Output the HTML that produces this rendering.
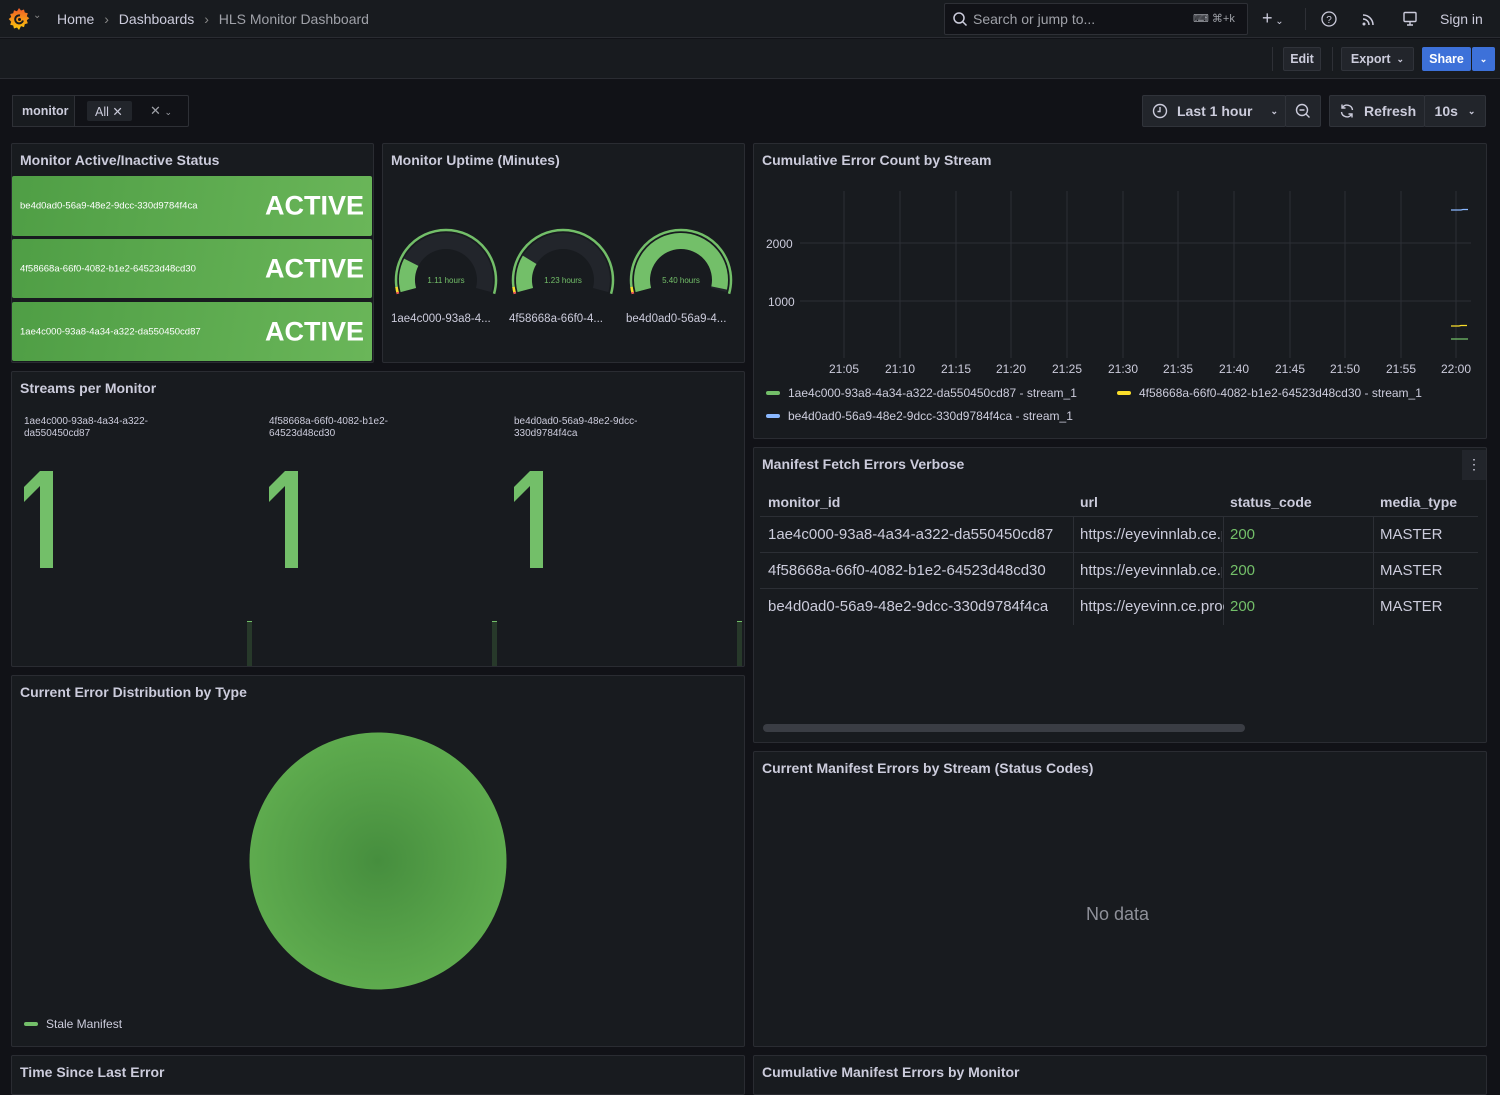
<!DOCTYPE html>
<html><head><meta charset="utf-8"><style>
*{box-sizing:border-box;margin:0;padding:0}
body{width:1500px;height:1071px;overflow:hidden;background:#111217;font-family:"Liberation Sans",sans-serif;color:#ccccdc;position:relative}
.a{position:absolute}
.panel{position:absolute;background:#181b1f;border:1px solid #2a2c32;border-radius:2px}
.pt{position:absolute;left:8px;top:8px;font-size:14px;font-weight:bold;color:#ccccdc;white-space:nowrap}
.btn{position:absolute;background:#22252b;border:1px solid #30333a;border-radius:2px;font-size:12.5px;font-weight:bold;color:#ccccdc;display:flex;align-items:center;justify-content:center}
.stat{position:absolute;left:12px;width:360px;background:linear-gradient(100deg,#4f9e45,#6ab659);border-radius:2px}
.stat .id{position:absolute;left:8px;top:50%;transform:translateY(-50%);font-size:9.5px;color:#fff}
.stat .v{position:absolute;right:8px;top:50%;transform:translateY(-50%);font-size:27px;color:#fff;font-weight:bold}
.lbl{position:absolute;font-size:11px;color:#ccccdc}
.td{position:absolute;font-size:15px;color:#ccccdc;white-space:nowrap;overflow:hidden}
</style></head><body>
<div class="a" style="left:0;top:0;width:1500px;height:38px;background:#181b1f;border-bottom:1px solid #2a2c32"></div>
<svg class="a" style="left:6px;top:6px" width="26" height="26" viewBox="0 0 26 26"><defs><linearGradient id="lg" x1="0" y1="1" x2="0" y2="0"><stop offset="0" stop-color="#fbca0a"/><stop offset="1" stop-color="#f05a28"/></linearGradient></defs><path d="M13 2l2 2.5 3-1 .8 3 3 .8-1 3 2.5 2-2.5 2 1 3-3 .8-.8 3-3-1L13 24l-2-2.5-3 1-.8-3-3-.8 1-3L2.7 13l2.5-2-1-3 3-.8.8-3 3 1z" fill="url(#lg)"/><path d="M14 9.5a4 4 0 1 0 3 5" stroke="#181b1f" stroke-width="2" fill="none"/><circle cx="13.5" cy="13.5" r="1.5" fill="#181b1f"/></svg>
<div class="a" style="left:33px;top:10px;font-size:10px;color:#888">⌄</div>
<div class="a" style="left:57px;top:11px;font-size:14px;color:#ccccdc">Home <span style="color:#888;margin:0 6px">›</span> Dashboards <span style="color:#888;margin:0 6px">›</span> <span style="color:#9fa1a8">HLS Monitor Dashboard</span></div>
<div class="a" style="left:944px;top:3px;width:304px;height:32px;background:#111217;border:1px solid #2e3036;border-radius:2px"></div>
<svg class="a" style="left:952px;top:11px" width="16" height="16"><circle cx="7" cy="7" r="5" stroke="#ccccdc" stroke-width="1.5" fill="none"/><path d="M11 11l3.5 3.5" stroke="#ccccdc" stroke-width="1.5"/></svg>
<div class="a" style="left:973px;top:11px;font-size:14px;color:#9fa1a8">Search or jump to...</div>
<div class="a" style="left:1193px;top:12px;font-size:11px;color:#9fa1a8">⌨ ⌘+k</div>
<div class="a" style="left:1262px;top:8px;font-size:18px;color:#ccccdc">+<span style="font-size:10px"> ⌄</span></div>
<div class="a" style="left:1305px;top:8px;width:1px;height:22px;background:#2e3036"></div>
<svg class="a" style="left:1321px;top:11px" width="16" height="16"><circle cx="8" cy="8" r="7" stroke="#ccccdc" stroke-width="1.3" fill="none"/><text x="8" y="12" font-size="10" text-anchor="middle" fill="#ccccdc" font-family="Liberation Sans">?</text></svg>
<svg class="a" style="left:1361px;top:11px" width="16" height="16"><circle cx="3" cy="13" r="1.5" fill="#ccccdc"/><path d="M2 8a6 6 0 0 1 6 6M2 4a10 10 0 0 1 10 10" stroke="#ccccdc" stroke-width="1.5" fill="none"/></svg>
<svg class="a" style="left:1402px;top:11px" width="16" height="16"><rect x="2" y="1.5" width="12" height="9" rx="1" stroke="#ccccdc" stroke-width="1.4" fill="none"/><path d="M5 14h6M8 10.5v3.5" stroke="#ccccdc" stroke-width="1.4"/></svg>
<div class="a" style="left:1440px;top:11px;font-size:14px;color:#ccccdc">Sign in</div>
<div class="a" style="left:0;top:39px;width:1500px;height:40px;background:#181b1f;border-bottom:1px solid #2a2c32"></div>
<div class="a" style="left:1272px;top:47px;width:1px;height:24px;background:#2e3036"></div>
<div class="btn" style="left:1283px;top:47px;width:38px;height:24px">Edit</div>
<div class="a" style="left:1332px;top:47px;width:1px;height:24px;background:#2e3036"></div>
<div class="btn" style="left:1341px;top:47px;width:73px;height:24px">Export <span style="font-size:9px;margin-left:6px">⌄</span></div>
<div class="btn" style="left:1422px;top:47px;width:49px;height:24px;background:#3d71d9;border-color:#3d71d9;color:#fff">Share</div>
<div class="btn" style="left:1472px;top:47px;width:23px;height:24px;background:#3d71d9;border-color:#3d71d9;color:#fff;font-size:9px">⌄</div>
<div class="a" style="left:12px;top:95px;width:177px;height:32px;border:1px solid #2e3036;border-radius:2px;background:#111217"></div>
<div class="a" style="left:12px;top:95px;width:63px;height:32px;border:1px solid #2e3036;background:#181b1f;font-size:12.5px;padding:8px 0 0 9px;font-weight:bold;color:#ccccdc">monitor</div>
<div class="a" style="left:87px;top:101px;width:45px;height:20px;background:#22252b;border-radius:2px;font-size:12.5px;padding:3px 0 0 8px">All ✕</div>
<div class="a" style="left:150px;top:103px;font-size:13px;color:#9fa1a8">✕ <span style="font-size:9px">⌄</span></div>
<div class="btn" style="left:1142px;top:95px;width:144px;height:32px;font-size:14px;justify-content:flex-start;padding-left:34px">Last 1 hour<span style="font-size:9px;margin-left:18px">⌄</span></div>
<svg class="a" style="left:1152px;top:103px" width="16" height="16"><circle cx="8" cy="8" r="6.5" stroke="#ccccdc" stroke-width="1.4" fill="none"/><path d="M8 4v4.5H5.5" stroke="#ccccdc" stroke-width="1.4" fill="none"/></svg>
<div class="btn" style="left:1285px;top:95px;width:36px;height:32px"></div>
<svg class="a" style="left:1295px;top:103px" width="16" height="16"><circle cx="7" cy="7" r="5.5" stroke="#ccccdc" stroke-width="1.4" fill="none"/><path d="M4.5 7h5M11 11l3.5 3.5" stroke="#ccccdc" stroke-width="1.4"/></svg>
<div class="btn" style="left:1329px;top:95px;width:96px;height:32px;font-size:14px;justify-content:flex-start;padding-left:34px">Refresh</div>
<svg class="a" style="left:1339px;top:103px" width="16" height="16"><path d="M13.5 7A5.5 5.5 0 0 0 3.5 4.5M2.5 9a5.5 5.5 0 0 0 10 2.5" stroke="#ccccdc" stroke-width="1.4" fill="none"/><path d="M3 1.5v3.5h3.5M13 14.5V11H9.5" stroke="#ccccdc" stroke-width="1.4" fill="none"/></svg>
<div class="btn" style="left:1424px;top:95px;width:62px;height:32px;font-size:14px">10s<span style="font-size:9px;margin-left:10px">⌄</span></div>

<div class="panel" style="left:11px;top:143px;width:363px;height:220px"><div class="pt">Monitor Active/Inactive Status</div></div>
<div class="stat" style="top:176px;height:60px"><div class="id">be4d0ad0-56a9-48e2-9dcc-330d9784f4ca</div><div class="v">ACTIVE</div></div>
<div class="stat" style="top:239px;height:59px"><div class="id">4f58668a-66f0-4082-b1e2-64523d48cd30</div><div class="v">ACTIVE</div></div>
<div class="stat" style="top:302px;height:59px"><div class="id">1ae4c000-93a8-4a34-a322-da550450cd87</div><div class="v">ACTIVE</div></div>

<div class="panel" style="left:382px;top:143px;width:363px;height:220px"><div class="pt">Monitor Uptime (Minutes)</div></div>
<svg id="gauges" class="a" style="left:382px;top:143px" width="363" height="220"></svg>
<div class="lbl" style="left:391px;top:313px;font-size:11.5px">1ae4c000-93a8-4...</div>
<div class="lbl" style="left:509px;top:313px;font-size:11.5px">4f58668a-66f0-4...</div>
<div class="lbl" style="left:626px;top:313px;font-size:11.5px">be4d0ad0-56a9-4...</div>

<div class="panel" style="left:753px;top:143px;width:734px;height:296px"><div class="pt">Cumulative Error Count by Stream</div></div>
<svg class="a" style="left:753px;top:143px" width="734" height="296" font-family="Liberation Sans" font-size="12" fill="#ccccdc">
<g stroke="#2c2f35" stroke-width="1">
<line x1="91" y1="48" x2="91" y2="215"/><line x1="147" y1="48" x2="147" y2="215"/><line x1="203" y1="48" x2="203" y2="215"/><line x1="258" y1="48" x2="258" y2="215"/><line x1="314" y1="48" x2="314" y2="215"/><line x1="370" y1="48" x2="370" y2="215"/><line x1="425" y1="48" x2="425" y2="215"/><line x1="481" y1="48" x2="481" y2="215"/><line x1="537" y1="48" x2="537" y2="215"/><line x1="592" y1="48" x2="592" y2="215"/><line x1="648" y1="48" x2="648" y2="215"/><line x1="703" y1="48" x2="703" y2="215"/>
<line x1="47" y1="100" x2="718" y2="100"/><line x1="47" y1="158" x2="718" y2="158"/></g>
<text x="13" y="105">2000</text><text x="15" y="163">1000</text>
<g text-anchor="middle"><text x="91" y="230">21:05</text><text x="147" y="230">21:10</text><text x="203" y="230">21:15</text><text x="258" y="230">21:20</text><text x="314" y="230">21:25</text><text x="370" y="230">21:30</text><text x="425" y="230">21:35</text><text x="481" y="230">21:40</text><text x="537" y="230">21:45</text><text x="592" y="230">21:50</text><text x="648" y="230">21:55</text><text x="703" y="230">22:00</text></g>
<path d="M698 67h10l2-.5h5" stroke="#8ab8ff" stroke-width="1.3" fill="none"/>
<path d="M698 183h8l2-.5h6" stroke="#fade2a" stroke-width="1.3" fill="none"/>
<path d="M698 196h17" stroke="#73bf69" stroke-width="1.3"/>
<rect x="13" y="248" width="14" height="4" rx="2" fill="#73bf69"/><text x="35" y="254">1ae4c000-93a8-4a34-a322-da550450cd87 - stream_1</text>
<rect x="364" y="248" width="14" height="4" rx="2" fill="#fade2a"/><text x="386" y="254">4f58668a-66f0-4082-b1e2-64523d48cd30 - stream_1</text>
<rect x="13" y="271" width="14" height="4" rx="2" fill="#8ab8ff"/><text x="35" y="277">be4d0ad0-56a9-48e2-9dcc-330d9784f4ca - stream_1</text>
</svg>

<div class="panel" style="left:11px;top:371px;width:734px;height:296px"><div class="pt">Streams per Monitor</div></div>
<div class="lbl" style="left:24px;top:416px;font-size:10px;line-height:12px">1ae4c000-93a8-4a34-a322-<br>da550450cd87</div>
<div class="lbl" style="left:269px;top:416px;font-size:10px;line-height:12px">4f58668a-66f0-4082-b1e2-<br>64523d48cd30</div>
<div class="lbl" style="left:514px;top:416px;font-size:10px;line-height:12px">be4d0ad0-56a9-48e2-9dcc-<br>330d9784f4ca</div>
<svg class="a" style="left:0;top:0" width="750" height="670">
<g fill="#73bf69">
<path d="M40 471h13v97H40V486l-16 16V487z"/>
<path d="M285 471h13v97h-13V486l-16 16V487z"/>
<path d="M530 471h13v97h-13V486l-16 16V487z"/>
</g>
<g fill="#27392a"><rect x="247" y="622" width="5" height="44"/><rect x="492" y="622" width="5" height="44"/><rect x="737" y="622" width="5" height="44"/></g>
<g fill="#73bf69"><rect x="247" y="621" width="5" height="1"/><rect x="492" y="621" width="5" height="1"/><rect x="737" y="621" width="5" height="1"/></g>
</svg>

<div class="panel" style="left:753px;top:447px;width:734px;height:296px"><div class="pt">Manifest Fetch Errors Verbose</div></div>
<div class="a" style="left:1462px;top:450px;width:24px;height:30px;background:#22252b;color:#ccccdc;font-size:14px;text-align:center;line-height:28px">⋮</div>
<div class="td" style="left:768px;top:494px;font-weight:bold;font-size:14px">monitor_id</div>
<div class="td" style="left:1080px;top:494px;font-weight:bold;font-size:14px">url</div>
<div class="td" style="left:1230px;top:494px;font-weight:bold;font-size:14px">status_code</div>
<div class="td" style="left:1380px;top:494px;font-weight:bold;font-size:14px">media_type</div>
<div class="a" style="left:760px;top:516px;width:718px;height:1px;background:#2c2f35"></div>
<div class="a" style="left:760px;top:552px;width:718px;height:1px;background:#2c2f35"></div>
<div class="a" style="left:760px;top:588px;width:718px;height:1px;background:#2c2f35"></div>
<div class="a" style="left:1073px;top:517px;width:1px;height:108px;background:#2c2f35"></div>
<div class="a" style="left:1223px;top:517px;width:1px;height:108px;background:#2c2f35"></div>
<div class="a" style="left:1373px;top:517px;width:1px;height:108px;background:#2c2f35"></div>
<div class="td" style="left:768px;top:526px">1ae4c000-93a8-4a34-a322-da550450cd87</div>
<div class="td" style="left:1080px;top:526px;width:142px">https://eyevinnlab.ce.prod</div>
<div class="td" style="left:1230px;top:526px;color:#73bf69">200</div>
<div class="td" style="left:1380px;top:526px">MASTER</div>
<div class="td" style="left:768px;top:562px">4f58668a-66f0-4082-b1e2-64523d48cd30</div>
<div class="td" style="left:1080px;top:562px;width:142px">https://eyevinnlab.ce.prod</div>
<div class="td" style="left:1230px;top:562px;color:#73bf69">200</div>
<div class="td" style="left:1380px;top:562px">MASTER</div>
<div class="td" style="left:768px;top:598px">be4d0ad0-56a9-48e2-9dcc-330d9784f4ca</div>
<div class="td" style="left:1080px;top:598px;width:144px">https://eyevinn.ce.prod</div>
<div class="td" style="left:1230px;top:598px;color:#73bf69">200</div>
<div class="td" style="left:1380px;top:598px">MASTER</div>
<div class="a" style="left:763px;top:724px;width:482px;height:8px;border-radius:4px;background:#3a3d44"></div>

<div class="panel" style="left:11px;top:675px;width:734px;height:372px"><div class="pt">Current Error Distribution by Type</div></div>
<svg class="a" style="left:240px;top:723px" width="280" height="280"><defs><radialGradient id="rg"><stop offset="0" stop-color="#468e3e"/><stop offset="1" stop-color="#5eab4e"/></radialGradient></defs><circle cx="138" cy="138" r="128.5" fill="url(#rg)"/></svg>
<div class="a" style="left:24px;top:1022px;width:14px;height:4px;border-radius:2px;background:#73bf69"></div>
<div class="a" style="left:46px;top:1017px;font-size:12px">Stale Manifest</div>

<div class="panel" style="left:753px;top:751px;width:734px;height:296px"><div class="pt">Current Manifest Errors by Stream (Status Codes)</div></div>
<div class="a" style="left:1086px;top:904px;font-size:18px;color:#8e9099">No data</div>

<div class="panel" style="left:11px;top:1055px;width:734px;height:40px"><div class="pt">Time Since Last Error</div></div>
<div class="panel" style="left:753px;top:1055px;width:734px;height:40px"><div class="pt">Cumulative Manifest Errors by Monitor</div></div>

<script>
(function(){
var svg=document.getElementById('gauges'),h='';
function pt(cx,cy,r,a){var t=a*Math.PI/180;return [cx+r*Math.cos(t),cy-r*Math.sin(t)];}
function arc(cx,cy,r,a0,a1){var p=pt(cx,cy,r,a0),q=pt(cx,cy,r,a1);var large=(a0-a1)>180?1:0;return 'M'+p[0].toFixed(2)+' '+p[1].toFixed(2)+'A'+r+' '+r+' 0 '+large+' 1 '+q[0].toFixed(2)+' '+q[1].toFixed(2);}
var A0=196,A1=-16,S=A0-A1;
[[64,0.2,'1.11 hours'],[181,0.22,'1.23 hours'],[299,0.985,'5.40 hours']].forEach(function(g){
 var cx=g[0],cy=137;
 h+='<path d="'+arc(cx,cy,50,A0,A1)+'" stroke="#73bf69" stroke-width="2.5" fill="none"/>';
 h+='<path d="'+arc(cx,cy,50,A0,A0-8)+'" stroke="#fade2a" stroke-width="2.5" fill="none"/>';
 h+='<path d="'+arc(cx,cy,50,A0,A0-2)+'" stroke="#f2495c" stroke-width="2.5" fill="none"/>';
 h+='<path d="'+arc(cx,cy,39,A0-1,A1+1)+'" stroke="#22252b" stroke-width="16" fill="none"/>';
 h+='<path d="'+arc(cx,cy,39,A0-1,A0-1-(S-2)*g[1])+'" stroke="#73bf69" stroke-width="16" fill="none"/>';
 h+='<text x="'+cx+'" y="'+(cy+3)+'" text-anchor="middle" font-size="8" fill="#73bf69" font-family="Liberation Sans">'+g[2]+'</text>';
});
svg.innerHTML=h;
})();
</script>
</body></html>
